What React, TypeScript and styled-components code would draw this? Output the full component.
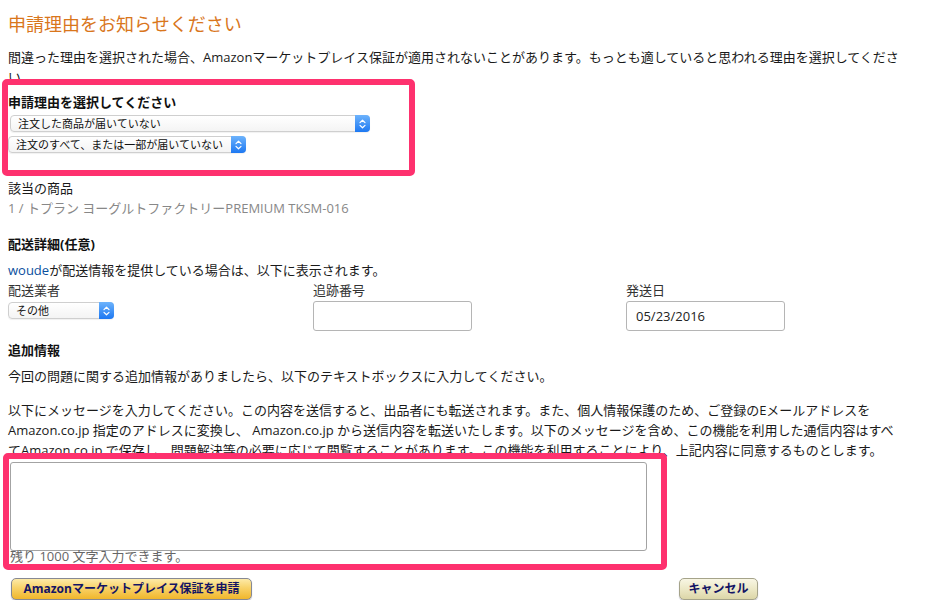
import React from "react";
import styled, { createGlobalStyle } from "styled-components";

const GlobalStyle = createGlobalStyle`
  html, body { margin: 0; padding: 0; background: #fff; }
  body {
    font-family: "Open Sans", "Noto Sans CJK JP", sans-serif;
    font-size: 13px;
    line-height: 20px;
    color: #1a1a1a;
  }
  * { box-sizing: border-box; }
`;

const Page = styled.div`
  padding: 0 8px;
  width: 934px;
`;

const Title = styled.h1`
  margin: 12px 0 0;
  font-size: 18px;
  line-height: 24px;
  font-weight: normal;
  color: #d9761c;
`;

const Para = styled.p<{ $mt?: number; $muted?: boolean }>`
  margin: ${(p) => p.$mt ?? 0}px 0 0;
  color: ${(p) => (p.$muted ? "#888" : "#1a1a1a")};
  white-space: nowrap;
`;

const Heading = styled.h3<{ $mt?: number }>`
  margin: ${(p) => p.$mt ?? 0}px 0 0;
  font-size: 13px;
  line-height: 20px;
  font-weight: bold;
  color: #111;
`;

const Highlight = styled.div<{ $mt: number; $ml: number; $w: number; $pt: number; $pb: number; $pl: number }>`
  position: relative;
  margin-top: ${(p) => p.$mt}px;
  margin-left: ${(p) => p.$ml}px;
  width: ${(p) => p.$w}px;
  padding: ${(p) => p.$pt}px 0 ${(p) => p.$pb}px ${(p) => p.$pl}px;
  border: 6px solid #fe316e;
  border-radius: 5px;
`;

const SelectBox = styled.div<{ $w: number; $mt?: number; $ml?: number }>`
  display: flex;
  align-items: center;
  width: ${(p) => p.$w}px;
  height: 17px;
  margin: ${(p) => p.$mt ?? 0}px 0 0 ${(p) => p.$ml ?? 0}px;
  padding-left: 7px;
  border: 1px solid #cfcfcf;
  border-radius: 4px;
  background: linear-gradient(#ffffff, #f4f4f4);
  box-shadow: 0 1px 1px rgba(0, 0, 0, 0.06);
  font-size: 11px;
  line-height: 15px;
  color: #111;
`;

const SelectText = styled.span`
  flex: 1;
  white-space: nowrap;
`;

const ArrowCap = styled.span`
  display: flex;
  align-items: center;
  justify-content: center;
  width: 15px;
  height: 17px;
  margin-right: -1px;
  border-radius: 0 4px 4px 0;
  background: linear-gradient(#6db3fc, #1d78f2);
`;

const Arrows = () => (
  <svg width="7" height="10" viewBox="0 0 7 10" fill="none" stroke="#fff" strokeWidth="1.2" strokeLinecap="round" strokeLinejoin="round">
    <path d="M1 3.6 L3.5 1.2 L6 3.6" />
    <path d="M1 6.4 L3.5 8.8 L6 6.4" />
  </svg>
);

const Select = ({ w, mt, ml, children }: { w: number; mt?: number; ml?: number; children: React.ReactNode }) => (
  <SelectBox $w={w} $mt={mt} $ml={ml}>
    <SelectText>{children}</SelectText>
    <ArrowCap>
      <Arrows />
    </ArrowCap>
  </SelectBox>
);

const Link = styled.a`
  color: #0a4f9e;
  text-decoration: none;
`;

const FieldGrid = styled.div`
  display: grid;
  grid-template-columns: 305px 313px 1fr;
`;

const Field = styled.div`
  display: flex;
  flex-direction: column;
  align-items: flex-start;
`;

const Label = styled.span`
  color: #333;
`;

const TextInput = styled.input`
  width: 159px;
  height: 30px;
  margin-top: 1px;
  padding: 0 9px;
  border: 1px solid #b5b5b5;
  border-radius: 3px;
  font-family: inherit;
  font-size: 13px;
  color: #222;
  background: #fff;
  outline: none;
`;

const MessageArea = styled.textarea`
  display: block;
  width: 637px;
  height: 89px;
  border: 1px solid #a3a3a3;
  border-radius: 3px;
  resize: none;
  font-family: inherit;
  outline: none;
`;

const Counter = styled.div`
  margin-top: -2px;
  font-size: 13px;
  line-height: 14px;
  color: #666;
`;

const ButtonRow = styled.div`
  display: flex;
  justify-content: space-between;
  width: 750px;
  margin-top: 8px;
  padding-left: 3px;
`;

const ActionButton = styled.button<{ $variant: "primary" | "secondary"; $w: number }>`
  width: ${(p) => p.$w}px;
  height: 22px;
  padding: 0;
  border-radius: 5px;
  border: 1px solid ${(p) => (p.$variant === "primary" ? "#868994" : "#a5a38a")};
  background: ${(p) =>
    p.$variant === "primary"
      ? "linear-gradient(#fdeaa8 0%, #f8d268 45%, #f0b62c 100%)"
      : "linear-gradient(#f8f6e4 0%, #ece8c6 50%, #dcd6a8 100%)"};
  box-shadow: 0 1px 1px rgba(60, 60, 90, 0.35);
  font-family: "Open Sans", "Noto Sans CJK JP", sans-serif;
  font-size: 12px;
  font-weight: bold;
  line-height: 20px;
  color: #131464;
  cursor: pointer;
  white-space: nowrap;
`;

export default function App() {
  return (
    <>
      <GlobalStyle />
      <Page>
        <Title>申請理由をお知らせください</Title>
        <Para $mt={11}>
          間違った理由を選択された場合、Amazonマーケットプレイス保証が適用されないことがあります。もっとも適していると思われる理由を選択してくださ
          <br />
          い。
        </Para>

        <Highlight $mt={-8} $ml={-6} $w={413} $pt={7} $pb={17} $pl={0}>
          <Heading>申請理由を選択してください</Heading>
          <Select w={360} mt={3} ml={2}>
            注文した商品が届いていない
          </Select>
          <Select w={238} mt={4}>
            注文のすべて、または一部が届いていない
          </Select>
        </Highlight>

        <Para $mt={2}>該当の商品</Para>
        <Para $muted>1 / トプラン ヨーグルトファクトリーPREMIUM TKSM-016</Para>

        <Heading $mt={16}>配送詳細(任意)</Heading>
        <Para $mt={6}>
          <Link href="#">woude</Link>が配送情報を提供している場合は、以下に表示されます。
        </Para>

        <FieldGrid>
          <Field>
            <Label>配送業者</Label>
            <Select w={106} mt={2}>
              その他
            </Select>
          </Field>
          <Field>
            <Label>追跡番号</Label>
            <TextInput defaultValue="" />
          </Field>
          <Field>
            <Label>発送日</Label>
            <TextInput defaultValue="05/23/2016" />
          </Field>
        </FieldGrid>

        <Heading $mt={9}>追加情報</Heading>
        <Para $mt={6}>今回の問題に関する追加情報がありましたら、以下のテキストボックスに入力してください。</Para>
        <Para $mt={14}>
          以下にメッセージを入力してください。この内容を送信すると、出品者にも転送されます。また、個人情報保護のため、ご登録のEメールアドレスを
          <br />
          Amazon.co.jp 指定のアドレスに変換し、 Amazon.co.jp から送信内容を転送いたします。以下のメッセージを含め、この機能を利用した通信内容はすべ
          <br />
          てAmazon.co.jp で保存し、問題解決等の必要に応じて閲覧することがあります。この機能を利用することにより、上記内容に同意するものとします。
        </Para>

        <Highlight $mt={-7} $ml={-5} $w={664} $pt={3} $pb={1} $pl={1}>
          <MessageArea />
          <Counter>残り 1000 文字入力できます。</Counter>
        </Highlight>

        <ButtonRow>
          <ActionButton $variant="primary" $w={241}>
            Amazonマーケットプレイス保証を申請
          </ActionButton>
          <ActionButton $variant="secondary" $w={79}>
            キャンセル
          </ActionButton>
        </ButtonRow>
      </Page>
    </>
  );
}
